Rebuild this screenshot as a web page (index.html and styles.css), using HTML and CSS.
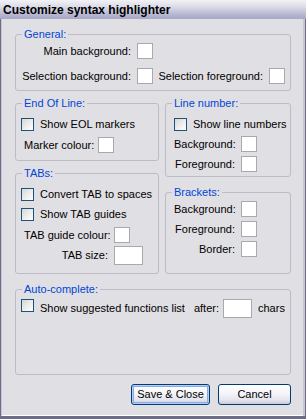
FILE: index.html
```html
<!DOCTYPE html>
<html>
<head>
<meta charset="utf-8">
<title>Customize syntax highlighter</title>
<link rel="stylesheet" href="styles.css">
</head>
<body>
<div class="window">
  <div class="titlebar">Customize syntax highlighter</div>
  <div class="client">
    <fieldset class="group general">
      <legend>General:</legend>
      <div class="general-grid">
        <span class="lbl">Main background:</span><span class="swatch"></span><span></span><span></span>
        <span class="lbl">Selection background:</span><span class="swatch"></span><span class="lbl">Selection foreground:</span><span class="swatch"></span>
      </div>
    </fieldset>

    <div class="columns">
      <div class="col">
        <fieldset class="group eol">
          <legend>End Of Line:</legend>
          <div class="body pad-cb">
            <label class="check"><span class="cb"></span><span>Show EOL markers</span></label>
            <div class="field eol-field gap6"><span class="lbl w68">Marker colour:</span><span class="swatch"></span></div>
          </div>
        </fieldset>
        <fieldset class="group tabs">
          <legend>TABs:</legend>
          <div class="body pad-cb">
            <label class="check"><span class="cb"></span><span>Convert TAB to spaces</span></label>
            <label class="check gap7"><span class="cb"></span><span>Show TAB guides</span></label>
            <div class="field tab-field gap6"><span class="lbl w84">TAB guide colour:</span><span class="swatch"></span></div>
            <div class="field tab-field gap3"><span class="lbl w84">TAB size:</span><span class="input"></span></div>
          </div>
        </fieldset>
      </div>
      <div class="col">
        <fieldset class="group linenum">
          <legend>Line number:</legend>
          <div class="body pad-right">
            <label class="check"><span class="cb"></span><span>Show line numbers</span></label>
            <div class="field gap5"><span class="lbl w61">Background:</span><span class="swatch"></span></div>
            <div class="field gap4"><span class="lbl w61">Foreground:</span><span class="swatch"></span></div>
          </div>
        </fieldset>
        <fieldset class="group brackets">
          <legend>Brackets:</legend>
          <div class="body pad-right top2">
            <div class="field"><span class="lbl w61">Background:</span><span class="swatch"></span></div>
            <div class="field gap4"><span class="lbl w61">Foreground:</span><span class="swatch"></span></div>
            <div class="field gap4"><span class="lbl w61">Border:</span><span class="swatch"></span></div>
          </div>
        </fieldset>
      </div>
    </div>

    <fieldset class="group auto">
      <legend>Auto-complete:</legend>
      <div class="body auto-body">
        <div class="auto-row">
          <span class="cb"></span>
          <span class="auto-text">Show suggested functions list</span>
          <span class="after">after:</span>
          <span class="input"></span>
          <span class="chars">chars</span>
        </div>
      </div>
    </fieldset>

    <div class="buttons">
      <button class="btn default">Save &amp; Close</button>
      <button class="btn cancel">Cancel</button>
    </div>
  </div>
</div>
</body>
</html>
```
FILE: styles.css
```css
html, body {
  margin: 0;
  padding: 0;
  background: #e0dfe3;
}
body {
  font: 11px/13px "Liberation Sans", Arial, sans-serif;
  color: #000;
}
.window {
  width: 306px;
  height: 419px;
  display: flex;
  flex-direction: column;
  box-sizing: border-box;
}
.titlebar {
  height: 19px;
  flex: none;
  padding-left: 3px;
  font: bold 12px/20px "Liberation Sans", Arial, sans-serif;
  background: linear-gradient(#f2f2f6 0%, #dcdce8 35%, #b8b8d2 75%, #a6a6c8 100%);
  white-space: nowrap;
}
.client {
  flex: 1;
  display: flex;
  flex-direction: column;
  padding: 9px 14px 0 14px;
  border-style: solid;
  border-color: #6c6c8c;
  border-width: 0 1px 3px 1px;
  box-shadow: inset 1px 0 #c6c6d2, inset -2px 0 #c6c6d2, inset 0 -1px #ffffff;
  box-sizing: border-box;
}
.group {
  flex: none;
  margin: 0;
  padding: 0;
  min-width: 0;
  border: 1px solid #bdbcc6;
  border-radius: 3px;
  box-sizing: border-box;
}
legend {
  margin-left: 6px;
  padding: 0 2px;
  color: #0046d5;
  line-height: 13px;
}
.general-grid {
  display: grid;
  grid-template-columns: 107px 16px 104px 16px;
  grid-template-rows: 16px 16px;
  column-gap: 6px;
  row-gap: 9px;
  padding: 2px 0 0 8px;
  height: 49px;
  box-sizing: border-box;
}
.lbl {
  white-space: nowrap;
  text-align: right;
  align-self: center;
}
.general-grid .lbl { justify-self: end; }
.swatch {
  display: block;
  width: 16px;
  height: 16px;
  box-sizing: border-box;
  background: #fff;
  border: 1px solid #a9a8ae;
  flex: none;
}
.input {
  display: block;
  width: 29px;
  height: 19px;
  box-sizing: border-box;
  background: #fff;
  border: 1px solid #a9a8ae;
  flex: none;
}
.columns {
  display: grid;
  grid-template-columns: 144px 126px;
  column-gap: 6px;
  margin-top: 6px;
}
.col { display: flex; flex-direction: column; }
.group.tabs { margin-top: 6px; }
.group.brackets { margin-top: 9px; }
.group.auto { margin-top: 9px; }

.body { display: flex; flex-direction: column; box-sizing: border-box; }
.eol .body { height: 50px; }
.tabs .body { height: 93px; }
.linenum .body { height: 66px; }
.brackets .body { height: 74px; }
.auto .body { height: 78px; }

.pad-cb { padding: 8px 0 0 5px; }
.pad-right { padding: 8px 0 0 8px; }
.pad-right.top2 { padding-top: 2px; }

.check {
  display: flex;
  align-items: center;
  gap: 6px;
  height: 13px;
  white-space: nowrap;
}
.cb {
  display: block;
  width: 13px;
  height: 13px;
  box-sizing: border-box;
  border: 1px solid #1c5180;
  background: linear-gradient(135deg, #d6d6d2 0%, #ececea 50%, #ffffff 100%);
  flex: none;
}
.field {
  display: flex;
  align-items: center;
  gap: 6px;
}
.eol-field, .tab-field { padding-left: 3px; }
.w68 { width: 68px; }
.w84 { width: 84px; }
.w61 { width: 61px; }
.gap3 { margin-top: 3px; }
.gap4 { margin-top: 4px; }
.gap5 { margin-top: 5px; }
.gap6 { margin-top: 6px; }
.gap7 { margin-top: 7px; }

.auto-body { padding: 3px 0 0 5px; }
.auto-row {
  display: flex;
  align-items: center;
  height: 19px;
  white-space: nowrap;
}
.auto-row .cb { align-self: flex-start; margin-right: 6px; }
.auto-text { width: 151px; }
.after { width: 28px; text-align: right; margin-right: 4px; }
.chars { margin-left: 6px; }

.buttons {
  display: flex;
  justify-content: flex-end;
  gap: 8px;
  margin-top: 9px;
}
.btn {
  height: 21px;
  margin: 0;
  padding: 0;
  font: 11px/13px "Liberation Sans", Arial, sans-serif;
  color: #000;
  border: 1px solid #003c74;
  border-radius: 3px;
  background: linear-gradient(#ffffff 0%, #f6f6fa 40%, #e4e4ee 80%, #c9c9d9 100%);
  box-sizing: border-box;
}
.btn.default {
  width: 79px;
  box-shadow: inset 0 0 0 1px #b6cdf5, inset 0 0 0 2px #8aaae6;
}
.btn.cancel { width: 73px; }
```
